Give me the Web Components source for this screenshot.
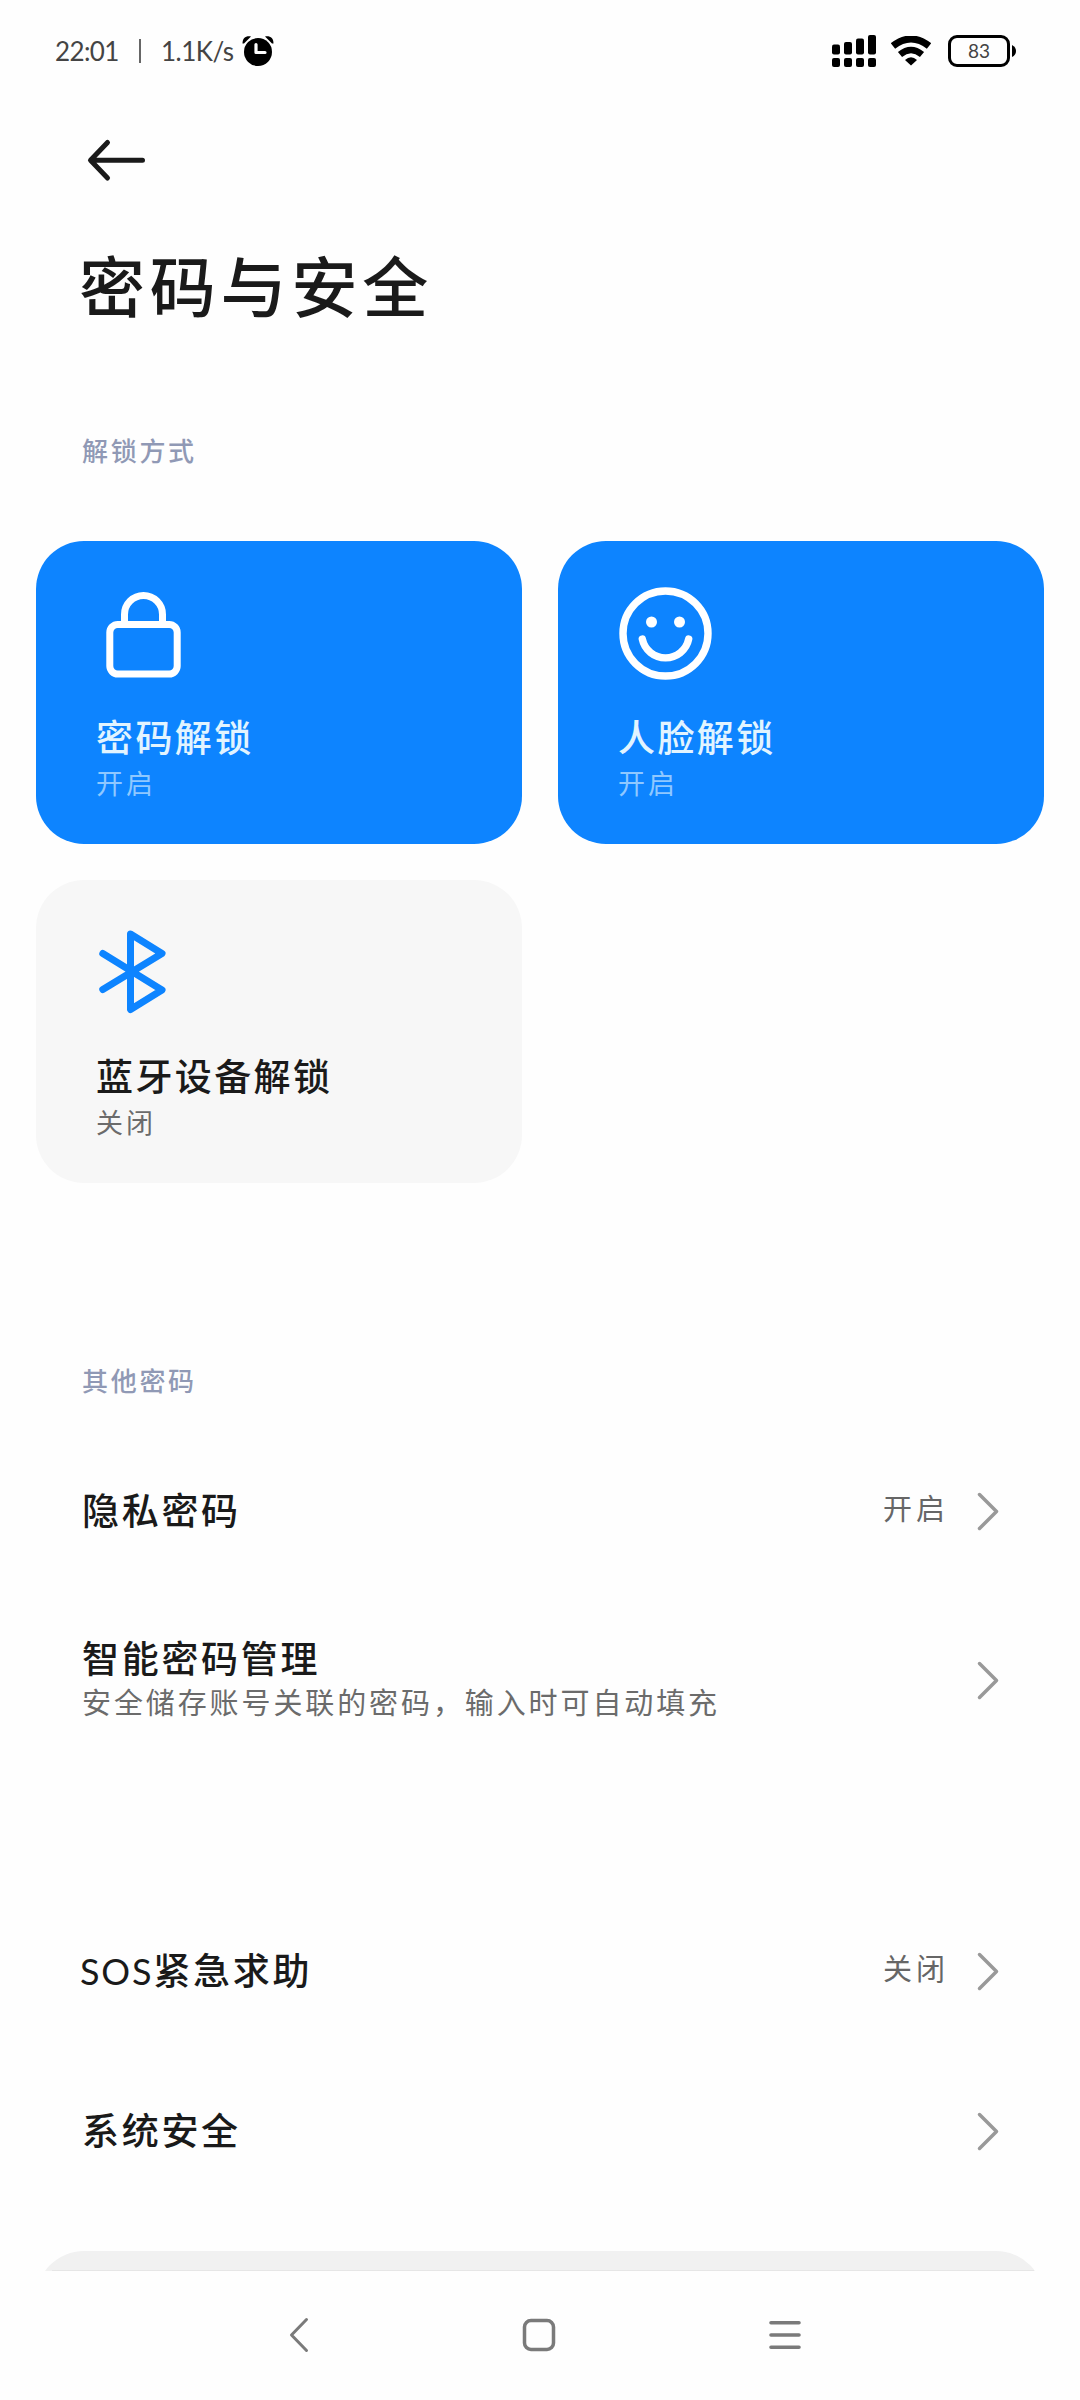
<!DOCTYPE html>
<html lang="zh-CN">
<head>
<meta charset="utf-8">
<title>密码与安全</title>
<style>
  body {
    margin: 0;
    background: #fefefe;
    font-family: Lato, "Noto Sans CJK SC", sans-serif;
    color: #1a1a1a;
  }
</style>
</head>
<body>
<security-page></security-page>

<script>
const define = (name, html) => {
  const template = document.createElement('template');
  template.innerHTML = html;
  window.customElements.define(name, class extends HTMLElement {
    constructor() {
      super();
      this.attachShadow({ mode: 'open' });
      this.shadowRoot.appendChild(template.content.cloneNode(true));
    }
  });
};

define('status-bar', `
<style>
  :host {
    display: flex;
    justify-content: space-between;
    align-items: center;
    height: 102px;
    padding: 0 64px 0 55px;
    box-sizing: border-box;
    color: #444;
    font-size: 26px;
    line-height: 32px;
  }
  .left, .right {
    display: flex;
    align-items: center;
  }
  .line {
    width: 2px;
    height: 24px;
    margin: 0 20px 0 23px;
    background: #666;
  }
  .time { width: 61px; }
  .speed { width: 81px; white-space: nowrap; }
  .time span { letter-spacing: -.6px; }
  .speed span { letter-spacing: -.5px; }
  .wifi { margin: 0 17px 0 15px; }
  .battery {
    display: flex;
    align-items: center;
    gap: 2px;
  }
  .level {
    display: flex;
    justify-content: center;
    align-items: center;
    width: 62px;
    height: 32px;
    box-sizing: border-box;
    border: 3px solid #000;
    border-radius: 9px;
    font-size: 19px;
  }
  svg { display: block; }
</style>
<div class="left">
  <div class="time"><span>22:01</span></div>
  <div class="line"></div>
  <div class="speed"><span>1.1K/s</span></div>
  <svg width="32" height="32" viewBox="0 0 32 32">
    <path d="M0.5 8.5C0.5 3 4 .5 9 1.5L2 8.500Z"/>
    <path d="M31.500 8.500C31.500 3 28 .5 23 1.500L30 8.500Z"/>
    <circle cx="16" cy="17" r="14"/>
    <path d="M14 9.500V17.500H23" fill="none" stroke="#fff" stroke-width="3.200" stroke-linecap="round" stroke-linejoin="round"/>
  </svg>
</div>
<div class="right">
  <svg width="44" height="32" viewBox="0 0 44 32">
    <rect x="0" y="9.500" width="8" height="10" rx="2"/>
    <rect x="12" y="7" width="8" height="12.500" rx="2"/>
    <rect x="24" y="3.500" width="8" height="16" rx="2"/>
    <rect x="36" y="0" width="8" height="19.500" rx="2"/>
    <rect x="0" y="23" width="8" height="9" rx="2"/>
    <rect x="12" y="23" width="8" height="9" rx="2"/>
    <rect x="24" y="23" width="8" height="9" rx="2"/>
    <rect x="36" y="23" width="8" height="9" rx="2"/>
  </svg>
  <svg class="wifi" width="40" height="30" viewBox="0 0 40 30">
    <path d="M2 10Q20-4 38 10" fill="none" stroke="#000" stroke-width="7"/>
    <path d="M9 18.500Q20 9.500 31 18.500" fill="none" stroke="#000" stroke-width="6.500"/>
    <path d="M14 24Q20 18.500 26 24L20 29.500Z"/>
  </svg>
  <div class="battery">
    <div class="level">83</div>
    <svg width="4" height="12" viewBox="0 0 4 12"><path d="M0 0Q4 2 4 6T0 12Z"/></svg>
  </div>
</div>`);

define('page-header', `
<style>
  :host {
    display: flex;
    flex-direction: column;
    align-items: flex-start;
    height: 299px;
    padding: 36px 79px 0;
    box-sizing: border-box;
  }
  svg { display: block; margin-left: 6px; }
  h1 {
    margin: 60px 0 0;
    font-size: 66px;
    font-weight: 500;
    line-height: 90px;
    letter-spacing: 4.800px;
  }
</style>
<svg width="64" height="44" viewBox="0 0 64 44" fill="none" stroke="#1a1a1a" stroke-width="5" stroke-linecap="round" stroke-linejoin="round">
  <path d="M22.500 4.500L5.500 22.300L22.500 40M6 22.300H57.500"/>
</svg>
<h1><slot></slot></h1>`);

define('section-label', `
<style>
  :host {
    display: block;
    height: 100px;
    padding: 0 82px;
    font-size: 26px;
    font-weight: 500;
    line-height: 100px;
    letter-spacing: 2.700px;
    color: #9099b5;
  }
</style>
<slot></slot>`);

define('unlock-card', `
<style>
  :host {
    display: flex;
    flex-direction: column;
    height: 303px;
    padding: 40px 60px 0;
    box-sizing: border-box;
    border-radius: 48px;
    background: #f7f7f7;
    --status: #6b6b6b;
  }
  :host([on]) {
    background: #0d84ff;
    color: #e2f4ff;
    --status: #8fc8ff;
  }
  .icon { height: 132px; }
  .name {
    font-size: 37px;
    font-weight: 500;
    line-height: 50px;
    letter-spacing: 2.400px;
  }
  .status {
    font-size: 27px;
    line-height: 42px;
    letter-spacing: 3px;
    color: var(--status);
  }
</style>
<div class="icon"><slot name="icon"></slot></div>
<div class="name"><slot></slot></div>
<div class="status"><slot name="status"></slot></div>`);

define('setting-row', `
<style>
  :host {
    display: flex;
    align-items: center;
    height: 160px;
    padding: 0 80px 0 82px;
    box-sizing: border-box;
  }
  :host([tall]) { height: 178px; }
  .text { flex: 1; }
  .name {
    font-size: 37px;
    font-weight: 500;
    line-height: 46px;
    letter-spacing: 2.700px;
  }
  ::slotted(.latin) {
    margin-left: -2px;
    font-size: 36px;
    font-weight: 400;
    letter-spacing: 1.800px;
  }
  .hint {
    font-size: 29px;
    letter-spacing: 2.900px;
    color: #6b6b6b;
  }
  ::slotted([slot=hint]) { display: block; line-height: 42px; }
  .value {
    padding-bottom: 4px;
    font-size: 29px;
    line-height: 40px;
    letter-spacing: 4px;
    color: #666;
    margin-right: 27px;
  }
</style>
<div class="text">
  <div class="name"><slot></slot></div>
  <div class="hint"><slot name="hint"></slot></div>
</div>
<div class="value"><slot name="value"></slot></div>
<svg width="24" height="40" viewBox="0 0 24 40" fill="none" stroke="#999" stroke-width="3.500" stroke-linecap="round" stroke-linejoin="round">
  <path d="M3.500 3.500L20.500 20.500L3.500 37.500"/>
</svg>`);

define('nav-bar', `
<style>
  :host {
    display: flex;
    justify-content: space-between;
    align-items: center;
    height: 129px;
    padding: 0 278px 2px 288px;
    box-sizing: border-box;
  }
  svg { display: block; }
</style>
<svg width="22" height="36" viewBox="0 0 22 36" fill="none" stroke="#7a7a7a" stroke-width="3" stroke-linecap="round" stroke-linejoin="round">
  <path d="M18.500 2.500L3.500 18L18.500 33.500"/>
</svg>
<svg width="34" height="34" viewBox="0 0 34 34" fill="none" stroke="#7a7a7a" stroke-width="3.500">
  <rect x="2.500" y="2.500" width="29" height="29" rx="6.500"/>
</svg>
<svg width="34" height="34" viewBox="0 0 34 34" stroke="#7a7a7a" stroke-width="3.600" stroke-linecap="round">
  <path d="M3 4.700H31M3 17H31M3 29.300H31"/>
</svg>`);

define('security-page', `
<style>
  :host {
    display: flex;
    flex-direction: column;
    width: 1080px;
    height: 2400px;
    overflow: hidden;
  }
  main {
    display: flex;
    flex-direction: column;
    height: 2169px;
    overflow: hidden;
  }
  .cards {
    display: grid;
    grid-template-columns: 1fr 1fr;
    gap: 36px;
    margin: 40px 36px 148px;
  }
  .cards svg { display: block; }
  .gap { height: 122px; }
  .next {
    height: 150px;
    margin: 40px 36px 0;
    border-radius: 48px;
    background: #f1f1f1;
  }
  .edge {
    height: 1px;
    margin: -1px 46px 0 52px;
    background: #e6e6e6;
  }
  main > *, .edge, nav-bar { flex: none; }
  nav-bar { margin-top: auto; }
</style>
<status-bar></status-bar>
<main>
  <page-header>密码与安全</page-header>
  <section-label>解锁方式</section-label>
  <div class="cards">
    <unlock-card on>
      <svg slot="icon" width="100" height="112" viewBox="0 0 100 112" fill="none" stroke="#fff" stroke-width="7">
        <rect x="13.800" y="43.500" width="67.400" height="49.500" rx="8"/>
        <path d="M28.500 43V33.500A19 19 0 0 1 66.500 33.500V43"/>
      </svg>
      密码解锁
      <span slot="status">开启</span>
    </unlock-card>
    <unlock-card on>
      <svg slot="icon" width="100" height="112" viewBox="0 0 100 112" fill="none" stroke="#fff" stroke-width="7.400">
        <circle cx="47.500" cy="52.500" r="42.500"/>
        <circle cx="33.500" cy="41" r="5.500" fill="#fff" stroke="none"/>
        <circle cx="61.500" cy="41" r="5.500" fill="#fff" stroke="none"/>
        <path d="M24.300 58A23.700 23.700 0 0 0 70.700 58" stroke-linecap="round"/>
      </svg>
      人脸解锁
      <span slot="status">开启</span>
    </unlock-card>
    <unlock-card>
      <svg slot="icon" width="100" height="112" viewBox="0 0 100 112" fill="none" stroke="#0d84ff" stroke-width="7" stroke-linecap="round" stroke-linejoin="round">
        <path d="M6.800 33.500L66 70L34.500 89.500V14L66 33.500L6.800 69.500"/>
      </svg>
      蓝牙设备解锁
      <span slot="status">关闭</span>
    </unlock-card>
  </div>
  <section-label>其他密码</section-label>
  <setting-row>隐私密码<span slot="value">开启</span></setting-row>
  <setting-row tall>智能密码管理<span slot="hint">安全储存账号关联的密码，输入时可自动填充</span></setting-row>
  <div class="gap"></div>
  <setting-row><span class="latin">SOS</span>紧急求助<span slot="value">关闭</span></setting-row>
  <setting-row>系统安全</setting-row>
  <div class="next"></div>
</main>
<div class="edge"></div>
<nav-bar></nav-bar>`);
</script>
</body>
</html>
